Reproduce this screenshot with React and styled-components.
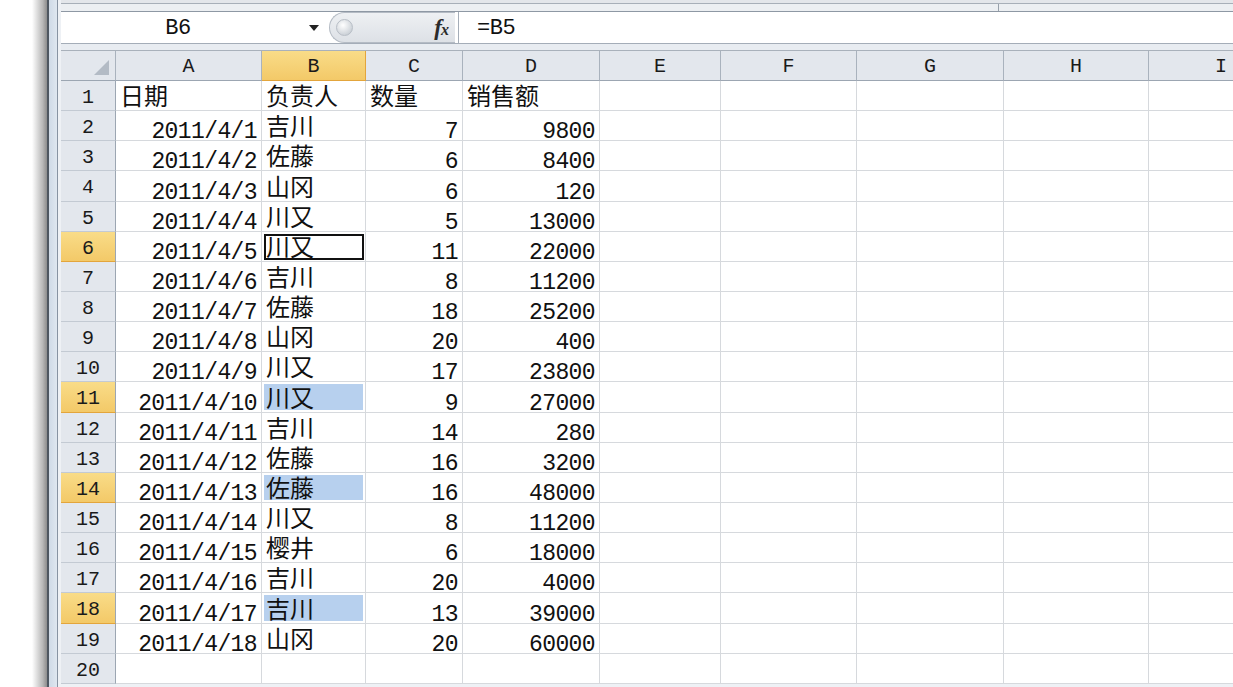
import React from "react";
import styled, { createGlobalStyle, css } from "styled-components";

const GlobalStyle = createGlobalStyle`
  html, body {
    margin: 0;
    padding: 0;
    background: #ffffff;
  }
  body {
    font-family: "Liberation Mono", "Noto Sans CJK SC", monospace;
    color: #111;
  }
`;

const COLS = ["A", "B", "C", "D", "E", "F", "G", "H", "I"];
const WIDTHS = [146, 104, 97, 137, 121, 136, 147, 145, 145];

const ROWS = [
  ["日期", "负责人", "数量", "销售额"],
  ["2011/4/1", "吉川", "7", "9800"],
  ["2011/4/2", "佐藤", "6", "8400"],
  ["2011/4/3", "山冈", "6", "120"],
  ["2011/4/4", "川又", "5", "13000"],
  ["2011/4/5", "川又", "11", "22000"],
  ["2011/4/6", "吉川", "8", "11200"],
  ["2011/4/7", "佐藤", "18", "25200"],
  ["2011/4/8", "山冈", "20", "400"],
  ["2011/4/9", "川又", "17", "23800"],
  ["2011/4/10", "川又", "9", "27000"],
  ["2011/4/11", "吉川", "14", "280"],
  ["2011/4/12", "佐藤", "16", "3200"],
  ["2011/4/13", "佐藤", "16", "48000"],
  ["2011/4/14", "川又", "8", "11200"],
  ["2011/4/15", "樱井", "6", "18000"],
  ["2011/4/16", "吉川", "20", "4000"],
  ["2011/4/17", "吉川", "13", "39000"],
  ["2011/4/18", "山冈", "20", "60000"],
  [],
];

const SELECTED_ROWS = [6, 11, 14, 18];
const HIGHLIGHT_ROWS = [11, 14, 18];
const ACTIVE_ROW = 6;

const Page = styled.div`
  width: 1233px;
  height: 687px;
  overflow: hidden;
  display: flex;
  background: #ffffff;
`;

const Margin = styled.div`
  width: 32px;
  flex-shrink: 0;
`;

const Shadow = styled.div`
  width: 15px;
  flex-shrink: 0;
  background: linear-gradient(to right, #ffffff, #b9b9b9 70%, #8d8d8d);
`;

const FrameEdge = styled.div`
  width: 8px;
  flex-shrink: 0;
  border-left: 2px solid #4e5761;
  border-right: 1px solid #8793a2;
  background: linear-gradient(to right, #cfdae7, #dfe7f0);
`;

const Workbook = styled.div`
  flex: 1;
  min-width: 0;
  display: flex;
  flex-direction: column;
  padding-left: 3px;
  background: #eef1f5;
`;

const RibbonEdge = styled.div`
  height: 12px;
  flex-shrink: 0;
  padding-top: 3px;
  box-sizing: border-box;
  background: #e3e6ea;
`;

const RibbonBand = styled.div`
  height: 9px;
  box-sizing: border-box;
  border-top: 1px solid #a7afb8;
  border-bottom: 1px solid #8e98a4;
  background: #eceff2;
  display: flex;
`;

const RibbonSegment = styled.div`
  width: 937px;
  border-right: 1px solid #98a1ab;
`;

const FormulaBar = styled.div`
  height: 32px;
  flex-shrink: 0;
  box-sizing: border-box;
  display: flex;
  background: #ffffff;
  border-bottom: 1px solid #a4adb8;
`;

const NameBox = styled.div`
  width: 268px;
  flex-shrink: 0;
  display: flex;
  align-items: center;
`;

const NameText = styled.div`
  flex: 1;
  text-align: center;
  font-size: 22px;
  letter-spacing: -0.5px;
  padding-right: 14px;
  padding-top: 2px;
`;

const Caret = styled.div`
  width: 0;
  height: 0;
  border-left: 5px solid transparent;
  border-right: 5px solid transparent;
  border-top: 6px solid #222;
  margin-right: 10px;
`;

const FxPill = styled.div`
  width: 126px;
  flex-shrink: 0;
  box-sizing: border-box;
  display: flex;
  align-items: center;
  justify-content: space-between;
  padding: 0 7px 0 6px;
  border: 1px solid #b4bbc4;
  border-right: none;
  border-radius: 16px 0 0 16px;
  background: linear-gradient(to bottom, #eef0f3, #dde1e6);
`;

const Knob = styled.div`
  width: 17px;
  height: 17px;
  border-radius: 50%;
  box-sizing: border-box;
  border: 1px solid #b8bec6;
  background: radial-gradient(circle at 40% 35%, #ffffff, #cfd4da 70%, #b9bfc7);
`;

const FxLabel = styled.div`
  font-family: "Liberation Serif", serif;
  font-style: italic;
  font-weight: bold;
  font-size: 23px;
  color: #2b2b2b;
  letter-spacing: -1px;

  small {
    font-size: 16px;
  }
`;

const FormulaInput = styled.div`
  flex: 1;
  display: flex;
  align-items: center;
  border-left: 1px solid #a4adb8;
  margin-left: 3px;
  padding-left: 18px;
  padding-top: 2px;
  font-size: 22px;
  letter-spacing: -0.5px;
`;

const BarGap = styled.div`
  height: 6px;
  flex-shrink: 0;
  background: #e8ecf1;
`;

const Sheet = styled.div`
  display: grid;
  grid-template-columns: 55px ${WIDTHS.map((w) => w + "px").join(" ")};
  grid-template-rows: 30px repeat(20, 30.15px);
  background: #ffffff;
  border-top: 1px solid #a9b1bb;
`;

const headerBase = css`
  box-sizing: border-box;
  display: flex;
  align-items: center;
  justify-content: center;
  font-size: 20px;
  color: #1a1a1a;
  background: ${(p) =>
    p.$selected ? "linear-gradient(to bottom, #f9dc88, #f3c968)" : "#e3e7ed"};
`;

const Corner = styled.div`
  ${headerBase};
  justify-content: flex-end;
  align-items: flex-end;
  padding: 0 6px 5px 0;
  border-right: 1px solid #a9b2bd;
  border-bottom: 1px solid #9ca6b2;
`;

const ColHeader = styled.div`
  ${headerBase};
  border-right: 1px solid ${(p) => (p.$selected ? "#e3a53c" : "#a9b2bd")};
  border-bottom: 1px solid ${(p) => (p.$selected ? "#e3a53c" : "#9ca6b2")};
  padding-top: 2px;
`;

const RowHeader = styled.div`
  ${headerBase};
  border-right: 1px solid #9ca6b2;
  border-bottom: 1px solid ${(p) => (p.$selected ? "#e3a53c" : "#c3cad3")};
  padding-top: 4px;
`;

const Cell = styled.div`
  box-sizing: border-box;
  display: flex;
  align-items: flex-end;
  justify-content: ${(p) => (p.$right ? "flex-end" : "flex-start")};
  padding: 0 4px ${(p) => (p.$cjk ? "1px" : "0")} 4px;
  border-right: 1px solid #d6d9dd;
  border-bottom: 1px solid #d6d9dd;
  font-size: ${(p) => (p.$cjk ? "24px" : "23px")};
  letter-spacing: ${(p) => (p.$cjk ? "0" : "-0.6px")};
  line-height: ${(p) => (p.$cjk ? "21px" : "16px")};
  white-space: nowrap;
  overflow: visible;
  background: ${(p) => (p.$hl ? "#b7d0ee" : "#ffffff")};
  box-shadow: ${(p) => (p.$hl ? "inset 0 0 0 2px #ffffff" : "none")};
  ${(p) =>
    p.$active &&
    css`
      outline: 2px solid #111;
      outline-offset: -4px;
    `}
`;

const isNumber = (v) => /^[0-9/]+$/.test(v);

export default function App() {
  return (
    <>
      <GlobalStyle />
      <Page>
        <Margin />
        <Shadow />
        <FrameEdge />
        <Workbook>
          <RibbonEdge>
            <RibbonBand>
              <RibbonSegment />
            </RibbonBand>
          </RibbonEdge>
          <FormulaBar>
            <NameBox>
              <NameText>B6</NameText>
              <Caret />
            </NameBox>
            <FxPill>
              <Knob />
              <FxLabel>
                f<small>x</small>
              </FxLabel>
            </FxPill>
            <FormulaInput>=B5</FormulaInput>
          </FormulaBar>
          <BarGap />
          <Sheet>
            <Corner>
              <svg width="15" height="15" viewBox="0 0 15 15">
                <polygon points="15,0 15,15 0,15" fill="#b3bbc5" />
              </svg>
            </Corner>
            {COLS.map((c) => (
              <ColHeader key={c} $selected={c === "B"}>
                {c}
              </ColHeader>
            ))}
            {ROWS.map((row, i) => {
              const n = i + 1;
              return (
                <React.Fragment key={n}>
                  <RowHeader $selected={SELECTED_ROWS.includes(n)}>{n}</RowHeader>
                  {COLS.map((c, j) => {
                    const v = row[j] || "";
                    const cjk = v !== "" && !isNumber(v);
                    return (
                      <Cell
                        key={c}
                        $right={!cjk && v !== ""}
                        $cjk={cjk}
                        $hl={j === 1 && HIGHLIGHT_ROWS.includes(n)}
                        $active={j === 1 && n === ACTIVE_ROW}
                      >
                        {v}
                      </Cell>
                    );
                  })}
                </React.Fragment>
              );
            })}
          </Sheet>
        </Workbook>
      </Page>
    </>
  );
}
